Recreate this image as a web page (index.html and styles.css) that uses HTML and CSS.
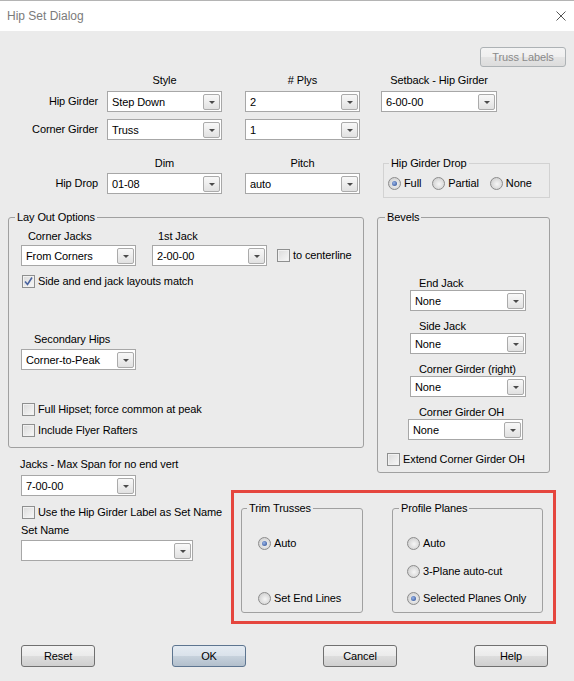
FILE: index.html
```html
<!doctype html>
<html>
<head>
<meta charset="utf-8">
<link rel="stylesheet" href="styles.css">
<title>Hip Set Dialog</title>
</head>
<body>
<div class="titlebar">
  <span class="title">Hip Set Dialog</span>
  <svg class="close" width="10" height="10" viewBox="0 0 10 10"><path d="M0.5 0.5 L9.5 9.5 M9.5 0.5 L0.5 9.5" stroke="#555" stroke-width="1" fill="none"/></svg>
</div>

<div class="toolbar"><span class="btn btn-disabled">Truss Labels</span></div>

<div class="girders">
  <span></span>
  <span class="head">Style</span>
  <span class="head"># Plys</span>
  <span class="head wide">Setback - Hip Girder</span>

  <span class="rowlabel">Hip Girder</span>
  <div class="select w115"><span class="value">Step Down</span><span class="drop"></span></div>
  <div class="select w115"><span class="value">2</span><span class="drop"></span></div>
  <div class="select w116"><span class="value">6-00-00</span><span class="drop"></span></div>

  <span class="rowlabel">Corner Girder</span>
  <div class="select w115"><span class="value">Truss</span><span class="drop"></span></div>
  <div class="select w115"><span class="value">1</span><span class="drop"></span></div>
  <span></span>

  <span></span>
  <span class="head">Dim</span>
  <span class="head">Pitch</span>
  <fieldset class="drop-group">
    <legend>Hip Girder Drop</legend>
    <div class="radio-line">
      <span class="opt"><span class="radio on"></span>Full</span>
      <span class="opt"><span class="radio"></span>Partial</span>
      <span class="opt"><span class="radio"></span>None</span>
    </div>
  </fieldset>

  <span class="rowlabel">Hip Drop</span>
  <div class="select w115"><span class="value">01-08</span><span class="drop"></span></div>
  <div class="select w115"><span class="value">auto</span><span class="drop"></span></div>
</div>

<div class="main">
  <fieldset class="layout">
    <legend>Lay Out Options</legend>
    <div class="inner">
      <div class="jack-row">
        <div class="field">
          <span class="cap cap-corner">Corner Jacks</span>
          <div class="select w115"><span class="value">From Corners</span><span class="drop"></span></div>
        </div>
        <div class="field field-first">
          <span class="cap cap-first">1st Jack</span>
          <div class="select w115"><span class="value">2-00-00</span><span class="drop"></span></div>
        </div>
        <span class="check-row centerline"><span class="check"></span>to centerline</span>
      </div>
      <span class="check-row side-row"><span class="check"><svg width="11" height="11" viewBox="0 0 11 11"><path d="M2 5.5 L4.5 8.5 L9 1.5" stroke="#4a64a0" stroke-width="1.6" fill="none"/></svg></span>Side and end jack layouts match</span>
      <span class="cap cap-secondary">Secondary Hips</span>
      <div class="select w115 sel-secondary"><span class="value">Corner-to-Peak</span><span class="drop"></span></div>
      <span class="check-row full-row"><span class="check"></span>Full Hipset; force common at peak</span>
      <span class="check-row flyer-row"><span class="check"></span>Include Flyer Rafters</span>
    </div>
  </fieldset>

  <fieldset class="bevels">
    <legend>Bevels</legend>
    <div class="bevel bevel-end">
      <span class="cap">End Jack</span>
      <div class="select w116"><span class="value">None</span><span class="drop"></span></div>
    </div>
    <div class="bevel bevel-side">
      <span class="cap">Side Jack</span>
      <div class="select w116"><span class="value">None</span><span class="drop"></span></div>
    </div>
    <div class="bevel bevel-side">
      <span class="cap">Corner Girder (right)</span>
      <div class="select w116"><span class="value">None</span><span class="drop"></span></div>
    </div>
    <div class="bevel bevel-side bevel-oh">
      <span class="cap">Corner Girder OH</span>
      <div class="select w115"><span class="value">None</span><span class="drop"></span></div>
    </div>
    <span class="check-row extend-row"><span class="check"></span>Extend Corner Girder OH</span>
  </fieldset>

  <div class="jacks">
    <span class="cap">Jacks - Max Span for no end vert</span>
    <div class="select w115 sel-span"><span class="value">7-00-00</span><span class="drop"></span></div>
    <span class="check-row label-row"><span class="check"></span>Use the Hip Girder Label as Set Name</span>
    <span class="cap cap-name">Set Name</span>
    <div class="select w172 sel-name"><span class="value"></span><span class="drop"></span></div>
  </div>

  <div class="highlight">
    <fieldset class="trim">
      <legend>Trim Trusses</legend>
      <span class="opt opt-first"><span class="radio on"></span>Auto</span>
      <span class="opt opt-end"><span class="radio"></span>Set End Lines</span>
    </fieldset>
    <fieldset class="profile">
      <legend>Profile Planes</legend>
      <span class="opt opt-first"><span class="radio"></span>Auto</span>
      <span class="opt opt-mid"><span class="radio"></span>3-Plane auto-cut</span>
      <span class="opt opt-last"><span class="radio on"></span>Selected Planes Only</span>
    </fieldset>
  </div>
</div>

<div class="actions">
  <span class="btn">Reset</span>
  <span class="btn btn-default">OK</span>
  <span class="btn">Cancel</span>
  <span class="btn">Help</span>
</div>
</body>
</html>
```

FILE: styles.css
```css
* {
    box-sizing: border-box;
}
body {
    margin: 0;
    width: 574px;
    height: 681px;
    overflow: hidden;
    font-family: "Liberation Sans", Arial, sans-serif;
    font-size: 11px;
    line-height: 14px;
    letter-spacing: -0.1px;
    color: #000;
    background-color: #ebebeb;
}

/* title bar */
.titlebar {
    height: 31px;
    background: #fff;
    border-top: 1px solid #b4b4b4;
    display: flex;
    align-items: center;
    justify-content: space-between;
    padding: 0 8px 0 7px;
}
.title {
    font-size: 12px;
    letter-spacing: 0;
    color: #7b7b7b;
}

/* buttons */
.btn {
    display: inline-flex;
    align-items: center;
    justify-content: center;
    width: 74px;
    height: 22px;
    border: 1px solid #707070;
    border-radius: 3px;
    background: linear-gradient(#f3f3f3, #ebebeb 48%, #dddddd 52%, #cfcfcf);
}
.btn-default {
    border-color: #5d7590;
    background: linear-gradient(#e4ebf2, #dae2eb 48%, #c6d1dc 52%, #b2bfcc);
}
.btn-disabled {
    width: 86px;
    height: 20px;
    color: #8a8a8a;
    border-color: #adb2b5;
    background: linear-gradient(#f4f4f4, #efefef 48%, #e4e4e4 52%, #dcdcdc);
}
.toolbar {
    display: flex;
    justify-content: flex-end;
    padding: 16px 8px 0 0;
}

/* combo boxes */
.select {
    display: flex;
    align-items: center;
    height: 21px;
    padding-left: 4px;
    background: #fff;
    border: 1px solid #a7a7a7;
}
.select .value {
    flex: 1;
    white-space: nowrap;
}
.drop {
    display: flex;
    align-items: center;
    justify-content: center;
    width: 17px;
    height: 16px;
    margin-right: 1px;
    border: 1px solid #ababab;
    border-radius: 2px;
    background: linear-gradient(#f8f8f8, #ededed 50%, #e1e1e1);
}
.drop::after {
    content: "";
    border-left: 3px solid transparent;
    border-right: 3px solid transparent;
    border-top: 3px solid #4a4a4a;
    margin-top: 1px;
}
.w115 { width: 115px; }
.w116 { width: 116px; }
.w172 { width: 172px; }

/* check boxes and radios */
.check-row,
.opt {
    display: flex;
    align-items: center;
    height: 14px;
    gap: 3px;
    white-space: nowrap;
}
.check {
    display: flex;
    align-items: center;
    justify-content: center;
    width: 13px;
    height: 13px;
    border: 1px solid #8e8f8f;
    background: linear-gradient(135deg, #dadada, #f8f8f8);
    box-shadow: inset 0 0 0 1px #f1f1f1;
}
.radio {
    display: flex;
    align-items: center;
    justify-content: center;
    width: 13px;
    height: 13px;
    border-radius: 50%;
    border: 1px solid #8c8c8c;
    background: radial-gradient(circle at 55% 55%, #f6f6f6, #d2d2d2 75%);
}
.radio.on::after {
    content: "";
    width: 5px;
    height: 5px;
    border-radius: 50%;
    background: radial-gradient(circle at 40% 40%, #9ab6ea, #23458c);
}

/* group boxes */
fieldset {
    margin: 0;
    padding: 0;
    min-width: 0;
    border: 1px solid #a0a0a0;
    border-radius: 3px;
}
legend {
    padding: 0 2px;
    margin-left: 6px;
    line-height: 14px;
}

/* top grid */
.girders {
    display: grid;
    grid-template-columns: 107px 138px 136px 193px;
    grid-template-rows: 18px 28px 37px 17px 21px;
    margin-top: 6px;
}
.head {
    width: 115px;
    text-align: center;
    align-self: start;
}
.head.wide {
    width: 116px;
}
.rowlabel {
    text-align: right;
    padding-right: 9px;
    height: 21px;
    line-height: 21px;
    white-space: nowrap;
}
.drop-group {
    grid-column: 4;
    grid-row: 4 / span 2;
    margin-left: 2px;
    width: 167px;
    height: 42px;
    border-color: #d2d2d2;
    border-radius: 0;
}
.drop-group legend {
    margin-left: 5px;
}
.radio-line {
    display: flex;
    gap: 11px;
    padding: 6px 0 0 4px;
}

/* middle section */
.main {
    display: grid;
    grid-template-columns: 8px 223px 133px 13px 179px;
    grid-template-rows: 238px 25px auto;
    margin-top: 16px;
}
.cap {
    display: block;
    white-space: nowrap;
}
.layout {
    grid-column: 2 / 4;
    grid-row: 1;
    height: 238px;
}
.inner {
    padding-left: 12px;
}
.jack-row {
    display: flex;
    align-items: flex-start;
    margin-top: 5px;
}
.field .select {
    margin-top: 2px;
}
.cap-corner {
    padding-left: 7px;
}
.field-first {
    margin-left: 16px;
}
.cap-first {
    padding-left: 6px;
}
.centerline {
    margin: 19px 0 0 10px;
}
.side-row {
    margin: 8px 0 0 1px;
}
.cap-secondary {
    margin-top: 44px;
    padding-left: 13px;
}
.sel-secondary {
    margin-top: 3px;
}
.full-row {
    margin: 32px 0 0 1px;
}
.flyer-row {
    margin: 7px 0 0 1px;
}

.bevels {
    grid-column: 5;
    grid-row: 1 / 3;
    width: 173px;
    height: 263px;
}
.bevels legend {
    margin-left: 7px;
}
.bevel {
    margin-left: 32px;
}
.bevel .cap {
    padding-left: 9px;
}
.bevel-end {
    margin-top: 52px;
}
.bevel-side {
    margin-top: 8px;
}
.bevel-oh {
    margin-left: 30px;
}
.bevel-oh .cap {
    padding-left: 11px;
}
.extend-row {
    margin: 12px 0 0 9px;
}

.jacks {
    grid-column: 2;
    grid-row: 2 / 4;
    margin-top: 9px;
    padding-left: 12px;
}
.sel-span {
    margin: 4px 0 0 1px;
}
.label-row {
    margin: 9px 0 0 2px;
}
.cap-name {
    margin-top: 4px;
    padding-left: 1px;
}
.sel-name {
    margin: 3px 0 0 1px;
}

.highlight {
    grid-column: 3 / 6;
    grid-row: 3;
    margin-top: 17px;
    height: 134px;
    border: 3px solid #e5463e;
    padding: 8px 0 0 7px;
    display: flex;
    align-items: flex-start;
    gap: 29px;
}
.trim,
.profile {
    height: 112px;
}
.trim {
    width: 122px;
}
.trim legend {
    margin-left: 5px;
}
.trim .opt {
    margin-left: 16px;
}
.profile {
    width: 151px;
}
.profile .opt {
    margin-left: 14px;
}
.opt-first {
    margin-top: 21px;
}
.opt-end {
    margin-top: 41px;
}
.opt-mid {
    margin-top: 14px;
}
.opt-last {
    margin-top: 13px;
}

/* bottom buttons */
.actions {
    display: flex;
    justify-content: space-between;
    margin-top: 21px;
    padding: 0 26px 0 21px;
}
```
